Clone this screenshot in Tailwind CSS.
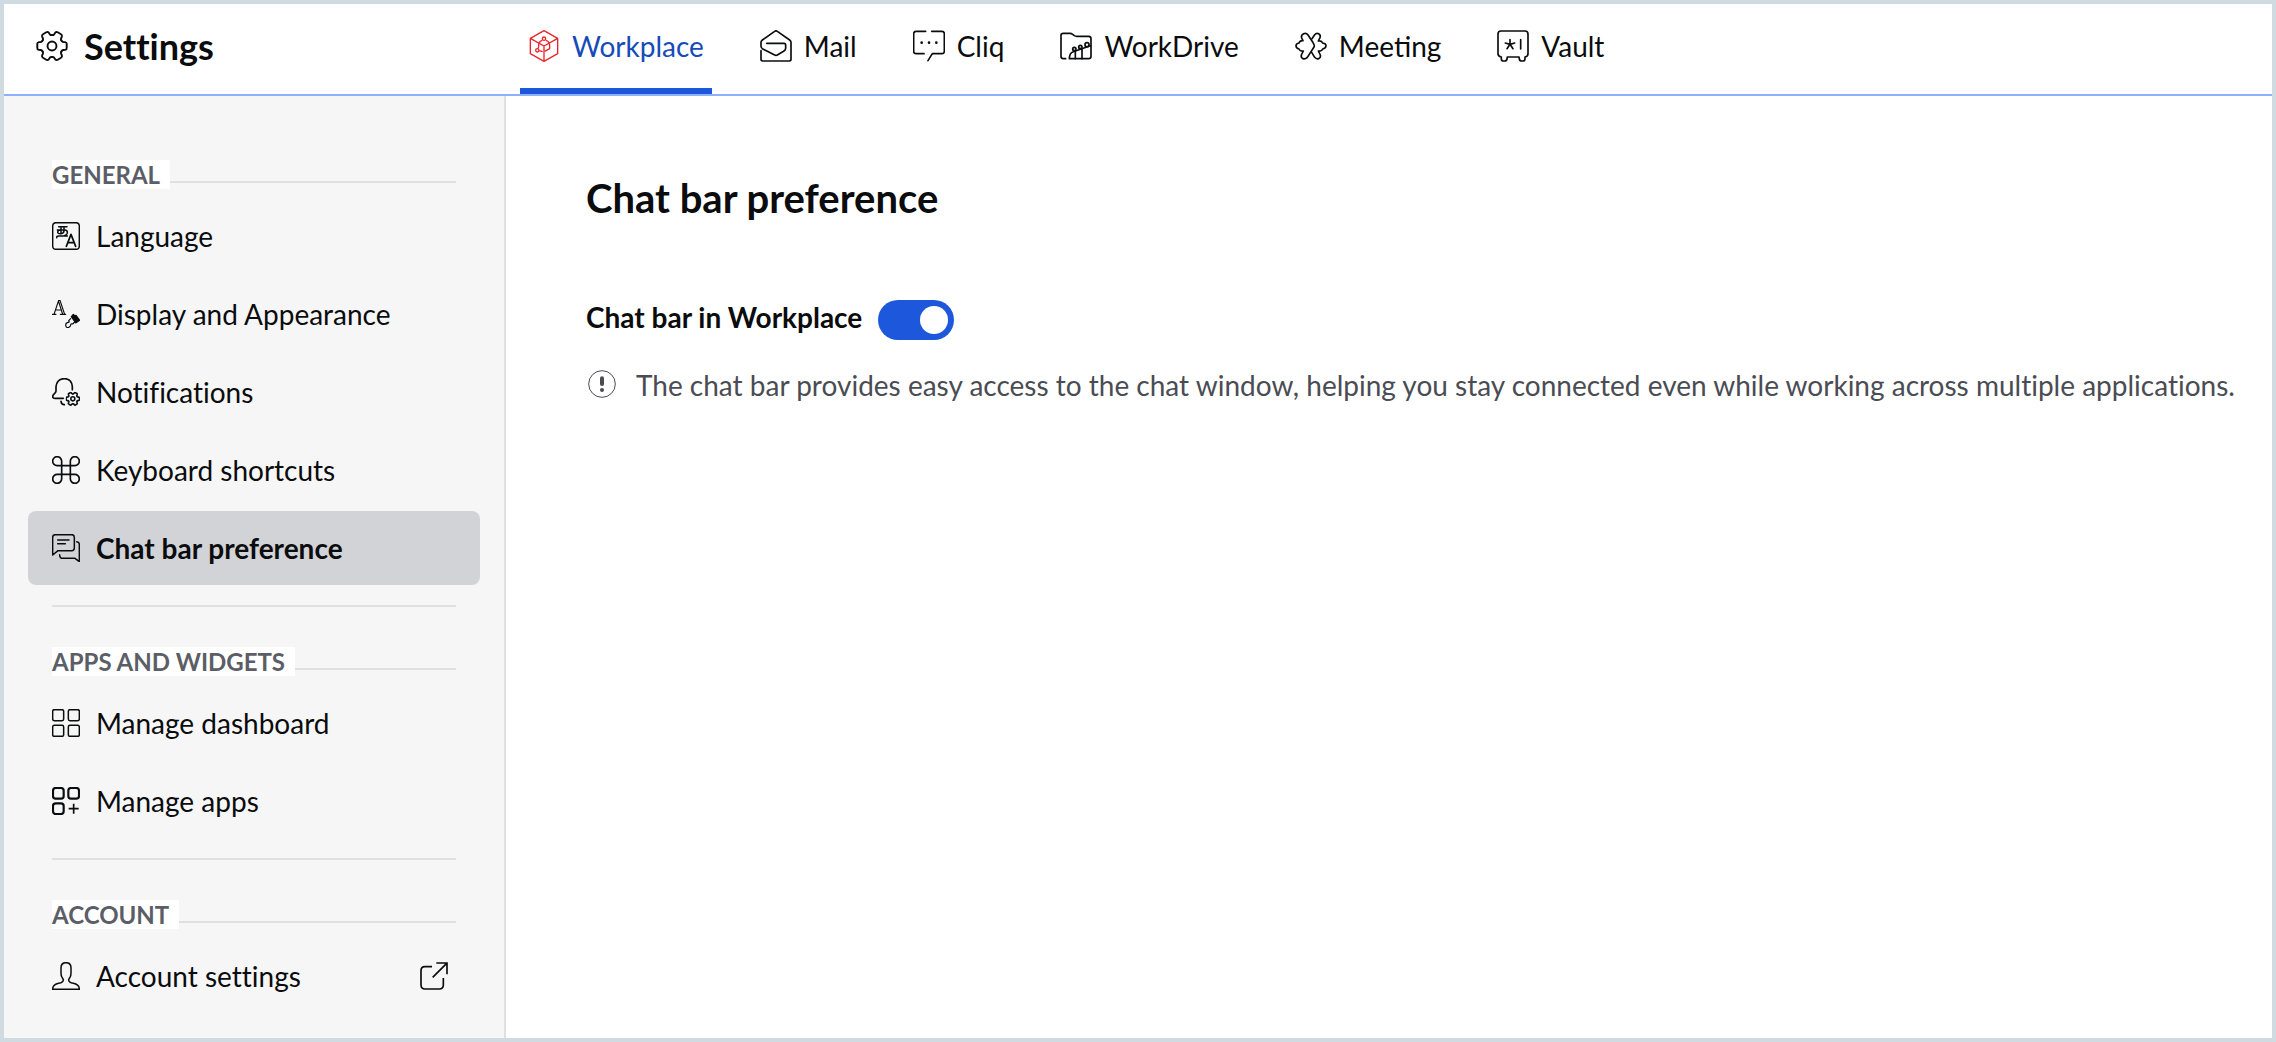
<!DOCTYPE html>
<html lang="en">
<head>
  <meta charset="UTF-8" />
  <meta name="viewport" content="width=device-width, initial-scale=1.0" />
  <title>Settings</title>
  <script src="https://cdn.jsdelivr.net/npm/@tailwindcss/browser@4"></script>
</head>
<body class="min-h-screen flex flex-col border-4 border-[#d0dbe1] bg-white font-['Lato',sans-serif] text-[28px] leading-[34px] text-[#0b0c0e] [font-variant-ligatures:none]">

  <!-- shared icon parts -->
  <svg class="hidden" aria-hidden="true">
    <symbol id="gear" viewBox="-50 -50 100 100" overflow="visible">
      <g id="gear-half">
        <path id="tooth" d="M29.4-17Q31.5-13 35-12.5L41-12Q46-11 46-6V6Q46 11 41 12L35 12.5Q31.5 13 29.4 17" />
        <use href="#tooth" transform="rotate(60)" />
        <use href="#tooth" transform="rotate(120)" />
      </g>
      <use href="#gear-half" transform="rotate(180)" />
      <circle r="14" />
    </symbol>
  </svg>

  <header class="flex border-b-2 border-[#8fb0ff]">
    <div class="w-[504px] shrink-0 flex items-center gap-4 pl-8 pb-1.5">
      <svg class="size-8" fill="none" stroke="currentColor" stroke-width="6" stroke-linecap="round"><use href="#gear" /></svg>
      <h1 class="text-4xl leading-[43px] font-bold">Settings</h1>
    </div>
    <nav class="flex gap-10 ml-3 [font-variant-ligatures:normal]">
      <a href="#" aria-current="page" class="h-[90px] flex items-center gap-3 px-2 border-b-6 border-[#1d58dc] text-[#164bb8]">
        <svg class="size-8" viewBox="0 0 96 96" fill="none" stroke="#e8252b" stroke-width="4" stroke-linejoin="round">
          <path d="M48 2 89 25V71L48 94 7 71V25ZM7 25 48 48 89 25M48 48V94" />
          <path d="M42 31A17 17 0 0 0 32 48L31 55M54 31A17 17 0 0 1 65 48V56L50 64M34 62 44 65" />
          <circle cx="48" cy="26" r="5" /><circle cx="28" cy="61" r="5" />
        </svg>
        Workplace
      </a>
      <a href="#" class="h-[90px] flex items-center gap-3 px-2 border-b-6 border-transparent">
        <svg class="size-8" viewBox="0 0 96 96" fill="none" stroke="currentColor" stroke-width="5" stroke-linecap="round" stroke-linejoin="round">
          <path d="M3 62V88Q3 93 8 93H88Q93 93 93 88V37Q93 33 89 30L52 4Q48 1 44 4L7 30Q3 33 3 37V48Q3 53 7 56L44 75Q48 77 52 75L72 63Q77 60 77 55V45Q77 40 72 40H20" />
        </svg>
        Mail
      </a>
      <a href="#" class="h-[90px] flex items-center gap-3 px-2 border-b-6 border-transparent">
        <svg class="size-8" viewBox="0 0 96 96" fill="none" stroke="currentColor" stroke-width="5" stroke-linecap="round" stroke-linejoin="round">
          <path d="M38 4H9Q2 4 2 11V64Q2 71 9 71H33M56 4H87Q94 4 94 11V64Q94 71 87 71H58L45 92" />
          <g fill="currentColor" stroke="none"><circle cx="26" cy="38" r="4" /><circle cx="48" cy="38" r="4" /><circle cx="70" cy="38" r="4" /></g>
        </svg>
        Cliq
      </a>
      <a href="#" class="h-[90px] flex items-center gap-3 px-2 border-b-6 border-transparent">
        <svg class="size-8" viewBox="0 0 96 96" fill="none" stroke="currentColor" stroke-width="5" stroke-linecap="round" stroke-linejoin="round">
          <path d="M17 86H10Q3 86 3 79V16Q3 10 10 10H30Q34 10 38 13L43 17Q46 19 50 19H86Q93 19 93 26V79Q93 86 86 86H28Q28 69 40 65L91 47" />
          <path d="M46 86V63M66 86V57" />
          <circle cx="43" cy="57" r="5" /><circle cx="61" cy="51" r="5" /><circle cx="81" cy="44" r="6" />
        </svg>
        WorkDrive
      </a>
      <a href="#" class="h-[90px] flex items-center gap-3 px-2 border-b-6 border-transparent">
        <svg class="size-8" viewBox="0 0 96 96" fill="none" stroke="currentColor" stroke-width="5" stroke-linecap="round" stroke-linejoin="round">
          <path d="M53 36 39 15Q34 8 26 11 17 15 20 24L24 32Q15 31 12 39 3 40 3 47.500T12 57Q15 65 25 63L19 75Q17 83 24 86 31 88 37 82L57 51Q59 48 57 44L53 36" />
          <path d="M51 26 59 14Q64 8 71 11 78 15 75 23L70 33Q80 31 83 39 93 40 93 47.500T83 57Q80 65 70 63L76 75Q78 83 71 86 64 88 59 82L50 67" />
        </svg>
        Meeting
      </a>
      <a href="#" class="h-[90px] flex items-center gap-3 px-2 border-b-6 border-transparent">
        <svg class="size-8" viewBox="0 0 96 96" fill="none" stroke="currentColor" stroke-width="5" stroke-linecap="round" stroke-linejoin="round">
          <path d="M12 3H84Q93 3 93 12V71Q93 79 84 81V87Q84 93 78 93H74Q68 93 67 87L66 81H31L30 87Q29 93 23 93H19Q13 93 13 87V81Q3 79 3 71V12Q3 3 12 3Z" />
          <path d="M39 29V43M39 43 25 39M39 43 53 39M39 43 30 56M39 43 48 56M71 29V57" />
        </svg>
        Vault
      </a>
    </nav>
  </header>

  <div class="flex grow">
    <aside class="w-[502px] shrink-0 border-r-2 border-[#e0e0e0] bg-[#f6f6f6] pt-16 px-6">

      <section>
        <div class="flex items-end mx-6 mb-2.5">
          <h2 class="bg-white pr-2.5 text-2xl leading-[29px] font-bold text-[#5b5e66]">GENERAL</h2>
          <span class="grow h-0.5 mb-1.5 bg-[#e0e0e0]"></span>
        </div>
        <nav class="flex flex-col gap-1">
          <a href="#" class="h-[74px] flex items-center gap-4 px-6 rounded-lg">
            <svg class="size-7" viewBox="0 0 84 84" fill="none" stroke="currentColor" stroke-width="4.5" stroke-linecap="round" stroke-linejoin="round">
              <rect x="2" y="2" width="80" height="80" rx="10" />
              <path d="M43 73 57 37 71 73M48 62H66" stroke-width="5" />
              <path d="M20 14H45M27 14V35M16 24H40Q47 25 46 33 45 39 39 40M36 14V26Q36 34 27 35 17 36 17 30 18 24 27 24M46 42H20Q14 42 14 47" />
            </svg>
            Language
          </a>
          <a href="#" class="h-[74px] flex items-center gap-4 px-6 rounded-lg">
            <svg class="size-7" viewBox="0 0 84 84" fill="none" stroke="currentColor" stroke-width="3.5" stroke-linecap="round" stroke-linejoin="round">
              <path d="M1 43H12M25 43H41M6 43 20 1H24L38 43M20 5 32 43M11 30H28" />
              <path d="M56 56 50 62Q54 68 48 67 41 68 41 76 42 84 50 82 56 80 56 75 56 70 62 72L68 66" />
              <path d="M58 50 64 43 69 48 72 46 83 61 71 69Z" fill="currentColor" />
            </svg>
            Display and Appearance
          </a>
          <a href="#" class="h-[74px] flex items-center gap-4 px-6 rounded-lg">
            <svg class="size-7" viewBox="0 0 84 84" fill="none" stroke="currentColor" stroke-width="5" stroke-linecap="round" stroke-linejoin="round">
              <path d="M61 35V26Q59 2 37 2T12 26V39Q12 42 8 46 2 51 2 56T9 61H34M27 70Q28 80 37 80" />
              <svg x="41" y="41" width="43" height="43" stroke-width="11"><use href="#gear" /></svg>
            </svg>
            Notifications
          </a>
          <a href="#" class="h-[74px] flex items-center gap-4 px-6 rounded-lg">
            <svg class="size-7" viewBox="0 0 84 84" fill="none" stroke="currentColor" stroke-width="5">
              <path d="M29 29H16A13.500 13.500 0 1 1 29 16V68A13.500 13.500 0 1 1 16 55H68A13.500 13.500 0 1 1 55 68V16A13.500 13.500 0 1 1 68 29Z" />
            </svg>
            Keyboard shortcuts
          </a>
          <a href="#" aria-current="page" class="h-[74px] flex items-center gap-4 px-6 rounded-lg bg-[#d2d3d7] font-bold">
            <svg class="size-7" viewBox="0 0 84 84" fill="none" stroke="currentColor" stroke-width="4.5" stroke-linecap="round" stroke-linejoin="round">
              <path d="M10 2H59Q67 2 67 10V42Q67 50 59 50H18L2 63V10Q2 2 10 2ZM17 18H51M17 29H40" />
              <path d="M74 23Q82 24 82 31V83L69 73H32Q23 73 23 62" />
            </svg>
            Chat bar preference
          </a>
        </nav>
      </section>

      <section class="mt-5">
        <hr class="mx-6 mb-10 border-t-2 border-[#e0e0e0]" />
        <div class="flex items-end mx-6 mb-2.5">
          <h2 class="bg-white pr-2.5 text-2xl leading-[29px] font-bold text-[#5b5e66]">APPS AND WIDGETS</h2>
          <span class="grow h-0.5 mb-1.5 bg-[#e0e0e0]"></span>
        </div>
        <nav class="flex flex-col gap-1">
          <a href="#" class="h-[74px] flex items-center gap-4 px-6 rounded-lg">
            <svg class="size-7" viewBox="0 0 84 84" fill="none" stroke="currentColor" stroke-width="4.5">
              <rect x="2" y="2" width="33" height="33" rx="5" /><rect x="49" y="2" width="33" height="33" rx="5" />
              <rect x="2" y="49" width="33" height="33" rx="5" /><rect x="49" y="49" width="33" height="33" rx="5" />
            </svg>
            Manage dashboard
          </a>
          <a href="#" class="h-[74px] flex items-center gap-4 px-6 rounded-lg">
            <svg class="size-7" viewBox="0 0 84 84" fill="none" stroke="currentColor" stroke-width="6.5">
              <rect x="3" y="3" width="32" height="32" rx="8" /><rect x="49" y="3" width="32" height="32" rx="8" />
              <rect x="3" y="49" width="32" height="32" rx="8" /><path d="M65 50V80M50 65H80" stroke-width="5" />
            </svg>
            Manage apps
          </a>
        </nav>
      </section>

      <section class="mt-5 pb-[25px]">
        <hr class="mx-6 mb-10 border-t-2 border-[#e0e0e0]" />
        <div class="flex items-end mx-6 mb-2.5">
          <h2 class="bg-white pr-2.5 text-2xl leading-[29px] font-bold text-[#5b5e66]">ACCOUNT</h2>
          <span class="grow h-0.5 mb-1.5 bg-[#e0e0e0]"></span>
        </div>
        <nav class="flex flex-col gap-1">
          <a href="#" class="h-[74px] flex items-center gap-4 pl-6 pr-8 rounded-lg">
            <svg class="size-7" viewBox="0 0 84 84" fill="none" stroke="currentColor" stroke-width="4.5" stroke-linejoin="round">
              <path d="M2 82V80Q3 68 20 64 35 61 34 53 33 50 30 46 27 42 27 33V18Q27 2 42 2T57 18V33Q57 42 54 46 51 50 50 53 49 61 64 64 81 68 82 80V82Z" />
            </svg>
            Account settings
            <svg class="size-7 ml-auto" viewBox="0 0 84 84" fill="none" stroke="currentColor" stroke-width="5">
              <path d="M36 14H15Q3 14 3 26V69Q3 81 15 81H58Q70 81 70 69V48M38 46 80 4M49 3H81V37" />
            </svg>
          </a>
        </nav>
      </section>
    </aside>

    <main class="grow pl-20 pr-8 pt-[78px]">
      <h2 class="text-[40px] leading-[48px] font-bold">Chat bar preference</h2>
      <div class="mt-[78px] flex items-start gap-4">
        <label for="chat-bar" class="font-bold">Chat bar in Workplace</label>
        <input type="checkbox" id="chat-bar" role="switch" checked class="appearance-none w-[76px] h-10 p-1.5 rounded-full flex bg-gray-400 checked:bg-[#1d58dc] checked:justify-end before:size-7 before:rounded-full before:bg-white" />
      </div>
      <p class="mt-7 flex items-start gap-5 pl-0.5 text-[#4a4c54]">
        <svg class="size-7 mt-0.5 shrink-0" viewBox="0 0 84 84" fill="none" stroke="currentColor" stroke-width="3">
          <circle cx="42" cy="42" r="40" />
          <rect x="36" y="19" width="12" height="29" rx="6" fill="currentColor" stroke="none" />
          <circle cx="42" cy="60" r="6" fill="currentColor" stroke="none" />
        </svg>
        The chat bar provides easy access to the chat window, helping you stay connected even while working across multiple applications.
      </p>
    </main>
  </div>

</body>
</html>
